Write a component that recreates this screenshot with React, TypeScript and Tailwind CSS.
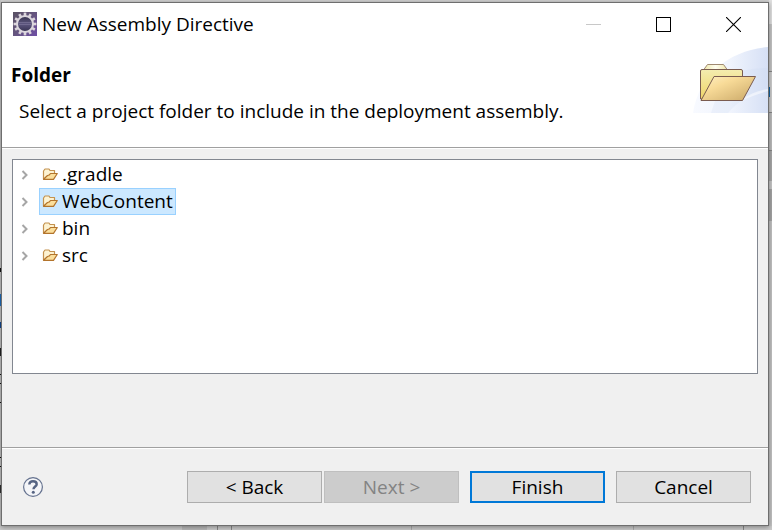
import React, { useState } from 'react'

type Folder = { id: string; name: string }

const folders: Folder[] = [
  { id: 'gradle', name: '.gradle' },
  { id: 'web', name: 'WebContent' },
  { id: 'bin', name: 'bin' },
  { id: 'src', name: 'src' },
]

function AppIcon() {
  const teeth = Array.from({ length: 12 }, (_, i) => i * 30)
  return (
    <svg width="24" height="24" viewBox="0 0 24 24" aria-hidden="true">
      <defs>
        <linearGradient id="appBg" x1="0" y1="0" x2="1" y2="1">
          <stop offset="0" stopColor="#5a5263" />
          <stop offset="0.5" stopColor="#65557f" />
          <stop offset="1" stopColor="#6f4ea6" />
        </linearGradient>
        <linearGradient id="appCore" x1="0" y1="0" x2="0" y2="1">
          <stop offset="0" stopColor="#35324d" />
          <stop offset="0.5" stopColor="#5d567f" />
          <stop offset="1" stopColor="#34304f" />
        </linearGradient>
      </defs>
      <rect width="24" height="24" fill="url(#appBg)" />
      {teeth.map(a => <rect key={a} x="10.7" y="0.6" width="2.6" height="4" fill="#dcd6dc" transform={`rotate(${a} 12 12)`} />)}
      <circle cx="12" cy="12" r="8" fill="url(#appCore)" stroke="#dcd7de" strokeWidth="2" />
      <path d="M6 10.500h12M6 12.500h12" stroke="#7b7499" strokeWidth="0.700" />
    </svg>
  )
}

function BannerArt() {
  return (
    <svg width="75" height="66" viewBox="0 0 75 66" className="block" aria-hidden="true">
      <defs>
        <linearGradient id="haze" x1="0" y1="0" x2="1" y2="0">
          <stop offset="0" stopColor="#f8faff" />
          <stop offset="0.5" stopColor="#f0f4fd" />
          <stop offset="1" stopColor="#d6e0f5" />
        </linearGradient>
        <linearGradient id="back" x1="0" y1="0" x2="0" y2="1">
          <stop offset="0" stopColor="#f4ecb0" />
          <stop offset="1" stopColor="#efd568" />
        </linearGradient>
        <linearGradient id="front" x1="0" y1="0" x2="1" y2="1">
          <stop offset="0" stopColor="#fff0c4" />
          <stop offset="0.35" stopColor="#f8db98" />
          <stop offset="1" stopColor="#c9a767" />
        </linearGradient>
        <linearGradient id="tab" x1="0" y1="0" x2="1" y2="0">
          <stop offset="0" stopColor="#efe7a8" />
          <stop offset="0.5" stopColor="#fffef0" />
          <stop offset="1" stopColor="#eee5a8" />
        </linearGradient>
      </defs>
      <path d="M0 66C6 26 38 3 75 0v66z" fill="url(#haze)" />
      <path d="M30 30C45 24 60 21 75 21v22C60 45 45 54 35 66H18z" fill="#c9d7f2" opacity="0.2" />
      <path d="M75 42C66 43 56 47 48 53C58 50 67 46 75 44z" fill="#fff" opacity="0.5" />
      <path d="M10.500 23l4-5.500h16l4 5.500z" fill="url(#tab)" stroke="#a08a72" />
      <path d="M7.500 52V24q0-1.500 1.500-1.500h39q1.500 0 1.500 1.500V52z" fill="url(#back)" stroke="#7a5c50" strokeLinejoin="round" />
      <path d="M8 53.500L21 29.500h41.500L49.500 53.500z" fill="url(#front)" stroke="#7a5c50" strokeLinejoin="round" />
    </svg>
  )
}

function FolderIcon() {
  return (
    <svg width="16" height="16" viewBox="0 0 16 16" className="shrink-0" aria-hidden="true">
      <path d="M1.500 13V5L3 3h4l1 1.500h4.500V7.500" fill="#fdf3d2" stroke="#c4924f" strokeWidth="1.200" strokeLinejoin="round" />
      <path d="M1.500 13.300L5.500 9.500Q7.500 9.500 8.500 7.500H15.300L11.500 13.300z" fill="#fbdf9c" stroke="#b3742c" strokeWidth="1.200" strokeLinejoin="round" />
    </svg>
  )
}

const captionButton = 'flex h-full w-[70px] items-center justify-center'
const pushButton = 'h-8 w-[135px] border border-[#adadad] bg-[#e1e1e1]'

export default function App() {
  const [selected, setSelected] = useState('web')

  return (
    <div className="relative flex min-h-screen overflow-hidden bg-[#d2d2d2] pt-[2px] pr-[3px] pb-1 pl-px font-['Open_Sans',sans-serif] text-[19px] leading-6 text-black">
      {/* slivers of the editor behind the dialog */}
      <div className="absolute inset-y-0 right-0 flex w-[3px] flex-col" aria-hidden="true">
        <div className="h-6 bg-[#e2e2e2]" />
        <div className="h-12 border-b border-[#888] bg-[#c6c6c6]" />
        <div className="flex h-[41px] items-center overflow-hidden border-b border-[#888] bg-[#cecece]">
          <div className="h-[10px] w-px bg-[#1668a8]" />
        </div>
        <div className="h-[38px] border-b border-[#888] bg-[#bdbdbd]" />
        <div className="h-[30px] bg-[#aaa]" />
        <div className="h-2 bg-[#c8c8c8]" />
        <div className="h-8 bg-[#a6a6a6]" />
        <div className="flex-1 bg-[#c4c4c4]" />
      </div>
      <div className="absolute inset-y-0 left-0 flex w-px flex-col bg-[#c8c8c8] pt-[268px]" aria-hidden="true">
        <div className="h-1 bg-[#111]" />
        <div className="mt-[22px] h-3 bg-[#1f6fc0]" />
        <div className="mt-4 h-[6px] bg-[#124a96]" />
        <div className="mt-5 h-2 bg-[#222]" />
        <div className="mt-[18px] h-px bg-[#111]" />
        <div className="mt-2 h-px bg-[#111]" />
        <div className="mt-[18px] h-px bg-[#111]" />
        <div className="mt-[54px] h-px bg-[#111]" />
        <div className="mt-2 h-px bg-[#111]" />
        <div className="mt-[18px] h-2 bg-[#333]" />
      </div>
      <div className="absolute inset-x-0 bottom-0 flex h-1 bg-[#cacaca]" aria-hidden="true">
        <div className="w-[182px]" />
        <div className="w-[25px] bg-[#b8b8b8]" />
        <div className="w-[11px] border-r border-[#888]" />
        <div className="w-[14px] border-r border-[#888]" />
        <div className="w-[180px] border-r border-[#aaa]" />
        <div className="w-[222px] border-r border-[#aaa]" />
        <div className="w-[110px] border-r border-[#888]" />
      </div>

      <div role="dialog" aria-labelledby="title" className="relative flex flex-1 flex-col border border-[#6e6e6e] bg-[#f0f0f0] shadow-[0_1px_5px_rgba(0,0,0,0.4)]">
        <div className="flex h-[42px] items-center bg-white pl-[11px]">
          <AppIcon />
          <h1 id="title" className="ml-[5px]">New Assembly Directive</h1>
          <div className="ml-auto flex h-full">
            <button className={captionButton} aria-label="Minimize" disabled>
              <svg width="15" height="15" viewBox="0 0 15 15"><path d="M0 7.500h15" stroke="#c8c8c8" /></svg>
            </button>
            <button className={captionButton} aria-label="Maximize">
              <svg width="15" height="15" viewBox="0 0 15 15"><rect x="0.5" y="0.5" width="14" height="14" fill="none" stroke="#000" /></svg>
            </button>
            <button className={captionButton} aria-label="Close">
              <svg width="15" height="15" viewBox="0 0 15 15"><path d="M0 0l15 15M15 0L0 15" stroke="#000" strokeWidth="1.100" /></svg>
            </button>
          </div>
        </div>

        <header className="flex items-start justify-between border-b border-[#a0a0a0] bg-white">
          <div className="pt-[18px] pb-6 pl-[9px]">
            <h2 className="font-bold">Folder</h2>
            <p className="mt-3 pl-2">Select a project folder to include in the deployment assembly.</p>
          </div>
          <div className="mt-[2px] shrink-0"><BannerArt /></div>
        </header>

        <main className="flex flex-1 flex-col border-t border-white px-[10px] pt-[10px] pb-[73px]">
          <ul role="tree" aria-label="Folders" className="flex-1 border border-[#828790] bg-white pt-px">
            {folders.map(f => (
              <li key={f.id} role="treeitem" aria-selected={selected === f.id} className="flex h-[27px] items-center">
                <button className="flex h-full w-[26px] items-center pl-2" aria-label={`Expand ${f.name}`}>
                  <svg width="8" height="10" viewBox="0 0 8 10"><path d="M1.500 1l4 4-4 4" fill="none" stroke="#a6a6a6" strokeWidth="2" /></svg>
                </button>
                <button
                  onClick={() => setSelected(f.id)}
                  className={`flex h-full items-center gap-1 border px-[2px] pb-[2px] ${selected === f.id ? 'border-[#99d1ff] bg-[#cce8ff]' : 'border-transparent'}`}
                >
                  <FolderIcon />
                  {f.name}
                </button>
              </li>
            ))}
          </ul>
        </main>

        <footer className="flex items-center border-t border-[#a0a0a0]">
          <div className="flex flex-1 items-center border-t border-white py-[22px] pr-[17px] pl-[21px]">
            <button aria-label="Help">
              <svg width="20" height="20" viewBox="0 0 20 20" className="block">
                <circle cx="10" cy="10" r="9.400" fill="#f4f5f8" stroke="#65728f" strokeWidth="1.200" />
                <path d="M6.300 7.600C6.300 5 8 4.200 10 4.200s3.700 1.100 3.700 3c0 2.300-3.200 2.400-3.200 5" fill="none" stroke="#566483" strokeWidth="2.400" />
                <circle cx="10.300" cy="15.200" r="1.500" fill="#566483" />
              </svg>
            </button>
            <div className="ml-auto flex">
              <button className={pushButton}>&lt; Back</button>
              <button className="ml-[2px] h-8 w-[135px] border border-[#bfbfbf] bg-[#cccccc] text-[#838383]" disabled>Next &gt;</button>
              <button className="ml-[11px] h-8 w-[135px] border-2 border-[#0078d7] bg-[#e1e1e1]">Finish</button>
              <button className={`${pushButton} ml-[11px]`}>Cancel</button>
            </div>
          </div>
        </footer>
      </div>
    </div>
  )
}
